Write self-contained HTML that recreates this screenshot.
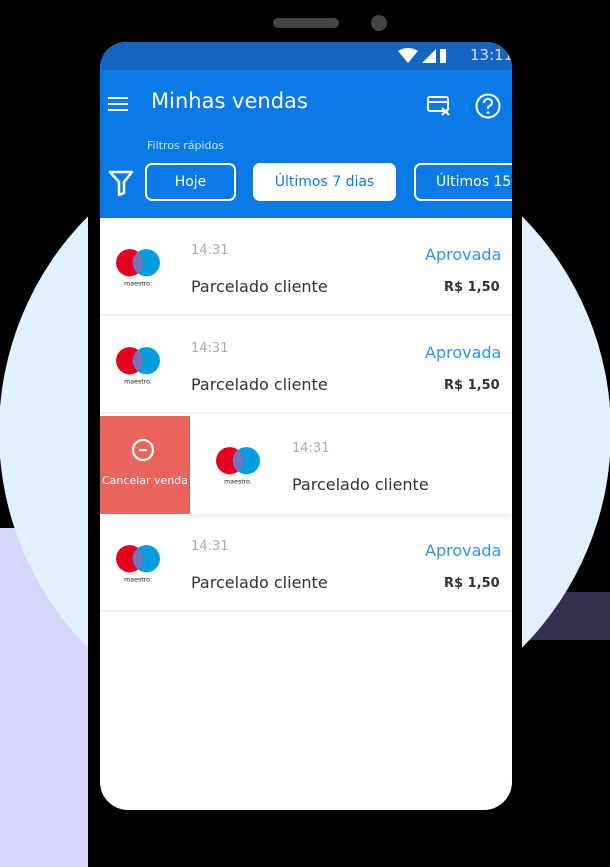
<!DOCTYPE html>
<html><head><meta charset="utf-8"><style>
*{margin:0;padding:0;box-sizing:border-box}
body{width:610px;height:867px;background:#000;position:relative;overflow:hidden;font-family:"DejaVu Sans","Liberation Sans",sans-serif}
.abs{position:absolute}
.circle{left:-1px;top:126px;width:612px;height:612px;border-radius:50%;background:#dff2fd}
.screen{left:100px;top:42px;width:412px;height:768px;background:#fff;border-radius:26px 26px 28px 28px;overflow:hidden}
.status{left:0;top:0;width:412px;height:28px;background:#1565c0}
.bar{left:0;top:28px;width:412px;height:148px;background:#0a7be6}
.row{left:0;width:412px;height:98px;border-bottom:2px solid #eef1f5}
.logo{width:46px;height:42px}
.time{font-size:13px;color:#a5acb6}
.desc{font-size:16px;color:#333}
.ap{font-size:16px;color:#2a97ea}
.val{font-size:13px;font-weight:bold;color:#333}
.chip{top:93px;height:38px;border:2px solid #fff;border-radius:7px;color:#fff;font-size:14px;text-align:center;line-height:34px}
</style></head><body>
<div class="abs" style="left:0;top:528px;width:88px;height:339px;background:#d6d4fc"></div>
<div class="abs" style="left:517px;top:592px;width:93px;height:48px;background:#343050"></div>
<div class="abs circle"></div>
<div class="abs" style="left:88px;top:0;width:434px;height:867px;background:#000;border-radius:40px"></div>
<div class="abs" style="left:273px;top:18px;width:66px;height:10px;border-radius:5px;background:#444"></div>
<div class="abs" style="left:371px;top:15px;width:16px;height:16px;border-radius:50%;background:#444"></div>
<div class="abs screen">
 <div class="abs status">
  <svg class="abs" style="left:296px;top:5px" width="50" height="18" viewBox="0 0 50 18"><path d="M2 4 Q12 -2 22 4 L12 16Z" fill="#fff"/><path d="M26 16 L40 2 L40 16Z" fill="#fff"/><rect x="44" y="2" width="7" height="14" fill="#fff"/></svg>
  <div class="abs" style="left:370px;top:4px;color:#dde;font-size:15px">13:11</div>
 </div>
 <div class="abs bar">
  <div class="abs" style="left:8px;top:27px;width:20px;height:2px;background:#fff;box-shadow:0 6px #fff,0 12px #fff"></div>
  <div class="abs" style="left:51px;top:19px;color:#fff;font-size:21px">Minhas vendas</div>
  <svg class="abs" style="left:326px;top:24px" width="26" height="24" viewBox="0 0 26 24"><rect x="2" y="3" width="20" height="14" rx="2" fill="none" stroke="#fff" stroke-width="2"/><line x1="2" y1="8" x2="22" y2="8" stroke="#fff" stroke-width="2"/><path d="M16 14 L23 21 M23 14 L16 21" stroke="#fff" stroke-width="2"/></svg>
  <svg class="abs" style="left:374px;top:22px" width="28" height="28" viewBox="0 0 28 28"><circle cx="14" cy="14" r="11.5" fill="none" stroke="#fff" stroke-width="2"/><path d="M10 11 Q10 7 14 7 Q18 7 18 11 Q18 13 14 15 L14 17" fill="none" stroke="#fff" stroke-width="2"/><circle cx="14" cy="20.5" r="1.3" fill="#fff"/></svg>
  <div class="abs" style="left:47px;top:69px;color:#cfe3fb;font-size:11px">Filtros rápidos</div>
  <svg class="abs" style="left:8px;top:99px" width="26" height="28" viewBox="0 0 26 28"><path d="M2 3 L24 3 L16 13 L16 24 L11 26 L11 13 Z" fill="none" stroke="#fff" stroke-width="2.5" stroke-linejoin="round"/></svg>
  <div class="abs chip" style="left:45px;width:91px">Hoje</div>
  <div class="abs chip" style="left:153px;width:143px;background:#fff;color:#0a7be6">Últimos 7 dias</div>
  <div class="abs chip" style="left:314px;width:110px;text-align:left;padding-left:20px;white-space:nowrap">Últimos 15 dias</div>
 </div>
 <div class="abs row" style="top:176px">
  <svg class="abs logo" style="left:15px;top:30px" viewBox="0 0 44 40"><circle cx="14" cy="14" r="13" fill="#e4001f"/><circle cx="30" cy="14" r="13" fill="#009ee0"/><path d="M22 3.7 A13 13 0 0 1 22 24.3 A13 13 0 0 1 22 3.7Z" fill="#7375bb"/><text x="22" y="36" font-size="6" text-anchor="middle" fill="#222">maestro.</text></svg>
  <div class="abs time" style="left:91px;top:25px">14:31</div>
  <div class="abs ap" style="left:325px;top:27px">Aprovada</div>
  <div class="abs desc" style="left:91px;top:59px">Parcelado cliente</div>
  <div class="abs val" style="left:344px;top:62px">R$ 1,50</div>
 </div>
 <div class="abs row" style="top:274px">
  <svg class="abs logo" style="left:15px;top:30px" viewBox="0 0 44 40"><circle cx="14" cy="14" r="13" fill="#e4001f"/><circle cx="30" cy="14" r="13" fill="#009ee0"/><path d="M22 3.7 A13 13 0 0 1 22 24.3 A13 13 0 0 1 22 3.7Z" fill="#7375bb"/><text x="22" y="36" font-size="6" text-anchor="middle" fill="#222">maestro.</text></svg>
  <div class="abs time" style="left:91px;top:25px">14:31</div>
  <div class="abs ap" style="left:325px;top:27px">Aprovada</div>
  <div class="abs desc" style="left:91px;top:59px">Parcelado cliente</div>
  <div class="abs val" style="left:344px;top:62px">R$ 1,50</div>
 </div>
 <div class="abs" style="left:0;top:374px;width:90px;height:98px;background:#e9655b">
  <svg class="abs" style="left:31px;top:22px" width="24" height="24" viewBox="0 0 24 24"><circle cx="12" cy="12" r="10" fill="none" stroke="#fff" stroke-width="2.2"/><rect x="8" y="11" width="8" height="2.2" fill="#fff"/></svg>
  <div class="abs" style="left:0;top:58px;width:90px;text-align:center;color:#fff;font-size:11px;white-space:nowrap">Cancelar venda</div>
 </div>
 <div class="abs" style="left:90px;top:374px;width:322px;height:98px;background:#fff;box-shadow:0 2px 4px rgba(0,0,0,.1)">
  <svg class="abs logo" style="left:25px;top:30px" viewBox="0 0 44 40"><circle cx="14" cy="14" r="13" fill="#e4001f"/><circle cx="30" cy="14" r="13" fill="#009ee0"/><path d="M22 3.7 A13 13 0 0 1 22 24.3 A13 13 0 0 1 22 3.7Z" fill="#7375bb"/><text x="22" y="36" font-size="6" text-anchor="middle" fill="#222">maestro.</text></svg>
  <div class="abs time" style="left:102px;top:25px">14:31</div>
  <div class="abs desc" style="left:102px;top:59px">Parcelado cliente</div>
 </div>
 <div class="abs row" style="top:472px">
  <svg class="abs logo" style="left:15px;top:30px" viewBox="0 0 44 40"><circle cx="14" cy="14" r="13" fill="#e4001f"/><circle cx="30" cy="14" r="13" fill="#009ee0"/><path d="M22 3.7 A13 13 0 0 1 22 24.3 A13 13 0 0 1 22 3.7Z" fill="#7375bb"/><text x="22" y="36" font-size="6" text-anchor="middle" fill="#222">maestro.</text></svg>
  <div class="abs time" style="left:91px;top:25px">14:31</div>
  <div class="abs ap" style="left:325px;top:27px">Aprovada</div>
  <div class="abs desc" style="left:91px;top:59px">Parcelado cliente</div>
  <div class="abs val" style="left:344px;top:62px">R$ 1,50</div>
 </div>
</div>
</body></html>
